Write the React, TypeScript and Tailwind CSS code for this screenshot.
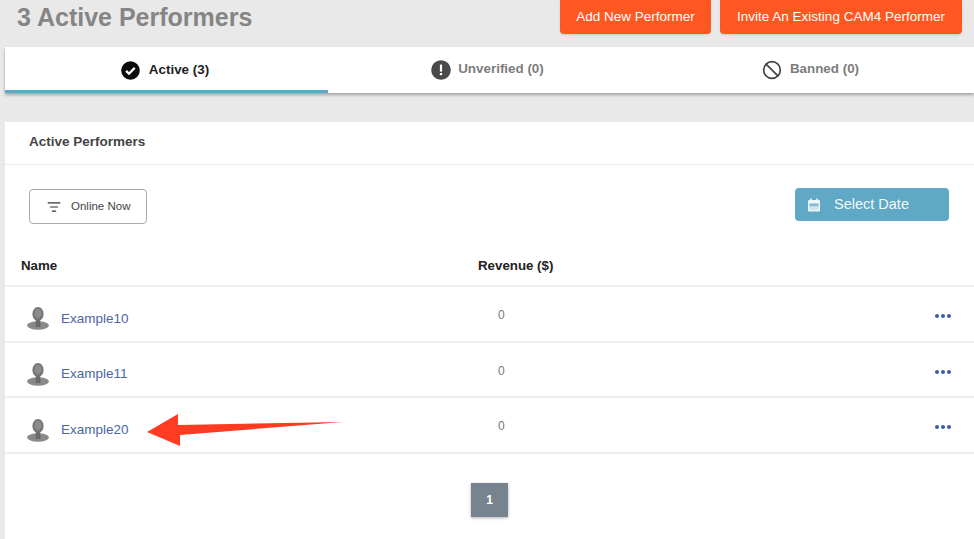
import { Ban, ListFilter } from "lucide-react"

const performers = ["Example10", "Example11", "Example20"]

function PersonIcon() {
  return (
    <svg width="24" height="25" viewBox="0 0 24 25" className="shrink-0">
      <ellipse cx="12" cy="19.5" rx="11" ry="4.2" fill="#8a8a8a" />
      <path d="M10 13h4l.6 8h-5.2z" fill="#6a6a6a" />
      <ellipse cx="12" cy="8" rx="5.6" ry="7" fill="#767676" />
      <ellipse cx="12" cy="7.5" rx="3.6" ry="4.6" fill="#8c8c8c" />
    </svg>
  )
}

function CheckIcon() {
  return (
    <svg width="19" height="19" viewBox="0 0 20 20">
      <circle cx="10" cy="10" r="9.8" fill="#0b0b0b" />
      <path d="M5.4 10.4l3 3 6-6.2" fill="none" stroke="#fff" strokeWidth="2.4" />
    </svg>
  )
}

function AlertIcon() {
  return (
    <svg width="20" height="20" viewBox="0 0 20 20">
      <circle cx="10" cy="10" r="9.8" fill="#4a4a4a" />
      <rect x="8.9" y="4.6" width="2.2" height="7" fill="#fff" />
      <rect x="8.9" y="13" width="2.2" height="2.2" fill="#fff" />
    </svg>
  )
}

function CalendarIcon() {
  return (
    <svg width="14" height="14" viewBox="0 0 14 14" className="shrink-0">
      <rect x="3" y="0.5" width="1.6" height="2.5" fill="#eef6f9" />
      <rect x="9.4" y="0.5" width="1.6" height="2.5" fill="#eef6f9" />
      <rect x="1" y="2" width="12" height="11.5" rx="1.2" fill="#eef6f9" />
      <rect x="2.4" y="5.5" width="9.2" height="3" fill="#7fbbd3" />
      <rect x="2.4" y="8.5" width="9.2" height="3.6" fill="#cfe5ee" />
    </svg>
  )
}

export default function App() {
  return (
    <div className="relative h-[539px] w-[974px] overflow-hidden bg-[#e9e9e9] font-['Liberation_Sans',Arial,sans-serif]">
      <header className="flex h-[47px] items-start justify-between pl-[17px] pr-3">
        <h1 className="text-[25px] font-bold leading-[35px] text-[#858585]">3 Active Performers</h1>
        <div className="flex gap-[9px]">
          <button className="h-[34px] w-[151px] rounded-b-sm bg-[#ff5722] text-[13.5px] text-white shadow-sm">
            Add New Performer
          </button>
          <button className="h-[34px] w-[242px] rounded-b-sm bg-[#ff5722] text-[13.5px] text-white shadow-sm">
            Invite An Existing CAM4 Performer
          </button>
        </div>
      </header>

      <nav className="ml-[5px] grid h-[46px] grid-cols-3 bg-white shadow-[0_2px_3px_rgba(0,0,0,0.3)]">
        <div className="flex items-center justify-center gap-[9px] border-b-[3px] border-[#5ba8c7] pr-[3px] pt-[3px] text-[13.4px] font-bold text-[#222]">
          <CheckIcon />
          Active (3)
        </div>
        <div className="flex items-center justify-center gap-[7px] pb-[1px] pr-1 text-[13.4px] font-bold text-[#7d7d7d]">
          <AlertIcon />
          Unverified (0)
        </div>
        <div className="flex items-center justify-center gap-2 pb-[1px] pr-1 text-[13.4px] font-bold text-[#7d7d7d]">
          <Ban size={20} color="#444" strokeWidth={2} />
          Banned (0)
        </div>
      </nav>

      <main className="ml-[5px] mt-[29px] h-[417px] bg-white">
        <div className="flex h-[43px] items-center border-b border-[#eaeaea] pb-[2px] pl-6 text-[13.5px] font-bold text-[#444]">
          Active Performers
        </div>

        <div className="flex items-start justify-between pl-6 pr-[25px] pt-6">
          <button className="flex h-[35px] w-[118px] items-center gap-[10px] rounded-sm border border-[#a9a9a9] pl-[17px] pt-[1px] text-[11.5px] text-[#444]">
            <ListFilter size={14} color="#333" />
            Online Now
          </button>
          <button className="-mt-px flex h-[33px] w-[154px] items-center gap-[13px] rounded-sm bg-[#5fa9c6] pl-3 text-[14.5px] text-[#f1f8fb]">
            <CalendarIcon />
            Select Date
          </button>
        </div>

        <div className="mt-[23px] grid h-[40px] grid-cols-[457px_1fr] items-center border-b-2 border-[#eeeeee] pl-4 text-[13.3px] font-bold text-[#222]">
          <span>Name</span>
          <span>Revenue ($)</span>
        </div>

        {performers.map((name) => (
          <div
            key={name}
            className="grid h-[55.7px] grid-cols-[472px_1fr_auto] items-center border-b-2 border-[#eeeeee] pl-[21px] pr-[23px]"
          >
            <div className="flex items-center gap-[11px] pt-[10px]">
              <PersonIcon />
              <a className="text-[13.5px] text-[#4a66a8]">{name}</a>
            </div>
            <span className="pt-[2px] text-[12px] text-[#777]">0</span>
            <div className="flex gap-[2px] pt-1">
              <i className="size-[4px] rounded-full bg-[#3b5ca8]" />
              <i className="size-[4px] rounded-full bg-[#3b5ca8]" />
              <i className="size-[4px] rounded-full bg-[#3b5ca8]" />
            </div>
          </div>
        ))}

        <div className="mt-[29px] flex justify-center">
          <span className="flex h-[34px] w-[37px] items-center justify-center bg-[#77838f] text-[12px] font-bold text-white shadow-[0_1px_3px_rgba(0,0,0,0.3)]">
            1
          </span>
        </div>
      </main>

      {/* annotation drawn over the screenshot */}
      <svg className="absolute left-[146px] top-[412px]" width="200" height="36" viewBox="0 0 200 36">
        <path d="M1 20 32 2 32 13 197 10 34 23 34 34Z" fill="#ff3b24" />
      </svg>
    </div>
  )
}
